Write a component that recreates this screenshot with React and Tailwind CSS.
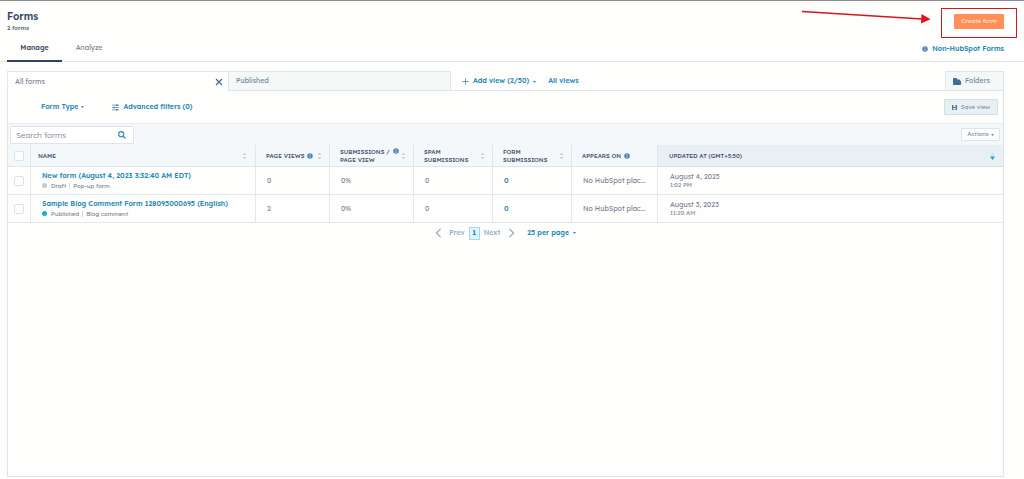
import React from "react";

const Caret = ({ className = "" }) => (
  <svg viewBox="0 0 6 4" className={`h-[2px] w-[3px] shrink-0 fill-current ${className}`} aria-hidden="true">
    <path d="M0 0h6L3 4z" />
  </svg>
);

const Info = () => (
  <svg viewBox="0 0 12 12" className="h-[6px] w-[6px] shrink-0" aria-hidden="true">
    <circle cx="6" cy="6" r="5.500" fill="#4a80b4" />
    <path d="M5 2.2h2v1.6H5zM4.6 5h2.2v3.6h.7v1H4.5v-1h.7V6h-.6z" fill="#c4d8ea" />
  </svg>
);

const Sort = ({ active = false }) => (
  <svg viewBox="0 0 10 16" className="h-[8px] w-[5px] shrink-0" aria-hidden="true">
    <path d="M1 6L5 1l4 5z" fill={active ? "#cfdbe5" : "#c9d1da"} />
    <path d={active ? "M0 9h10L5 16z" : "M1 10l4 5 4-5z"} fill={active ? "#19a5cf" : "#c9d1da"} />
  </svg>
);

const Chevron = ({ right = false }) => (
  <svg viewBox="0 0 8 12" className="h-[10px] w-[7px]" fill="none" stroke="#a0a8b2" strokeWidth="1.5" aria-hidden="true">
    <path d={right ? "M1.5 1l5 5-5 5" : "M6.5 1l-5 5 5 5"} />
  </svg>
);

const columns = [
  { label: "Page views", info: true, sort: true, width: "w-[74px]" },
  { label: "Submissions / page view", info: true, sort: true, width: "w-[84px]", lines: ["Submissions /", "page view"] },
  { label: "Spam submissions", sort: true, width: "w-[79px]", lines: ["Spam", "submissions"] },
  { label: "Form submissions", sort: true, width: "w-[79px]", lines: ["Form", "submissions"] },
  { label: "Appears on", info: true, width: "w-[86px]" },
];

const forms = [
  {
    name: "New form (August 4, 2023 3:32:40 AM EDT)",
    status: "Draft", type: "Pop-up form", views: "0", date: "August 4, 2023", time: "1:02 PM",
  },
  {
    name: "Sample Blog Comment Form 128095000695 (English)",
    status: "Published", type: "Blog comment", views: "2", date: "August 3, 2023", time: "11:20 AM",
  },
];

const Check = ({ label }) => (
  <input
    type="checkbox"
    aria-label={label}
    className="mx-auto block h-[10px] w-[10px] appearance-none rounded-[2px] border border-[#dbe2ea] bg-white"
  />
);

function PageHeader() {
  return (
    <header className="relative border-b border-[#e2e4e8] pl-[7px] pr-5">
      <div className="flex h-[36px] items-start justify-between">
        <div className="pt-[9px]">
          <h1 className="text-[10px] leading-[14px] font-semibold text-[#34476b]">Forms</h1>
          <p className="text-[6px] leading-[8px] font-medium text-[#4f5d78]">2 forms</p>
        </div>
        <button className="mt-[13px] h-[15px] w-[50px] rounded-[1px] bg-[#ff8f59] text-[6px] text-[#ffe6d8]">
          Create form
        </button>
      </div>
      <div className="flex h-[24px] items-stretch justify-between">
        <div role="tablist" className="-mb-px flex text-[7px]">
          <button role="tab" aria-selected="true" className="w-[55px] border-b-2 border-[#34406b] font-semibold text-[#45526b]">
            Manage
          </button>
          <button role="tab" aria-selected="false" className="w-[54px] border-b-2 border-transparent text-[#7c8494]">
            Analyze
          </button>
        </div>
        <a href="#non-hubspot" className="flex items-center gap-1 text-[7px] font-semibold text-[#2b8cb8]">
          <Info />
          Non-HubSpot Forms
        </a>
      </div>
      <div className="pointer-events-none absolute top-[7px] right-[7px] h-[30px] w-[76px] border border-[#d8141e]" />
      <svg viewBox="0 0 130 16" className="pointer-events-none absolute top-[8px] right-[93px] h-[16px] w-[130px]" aria-hidden="true">
        <path d="M1 2.5L121 10" stroke="#d9141c" strokeWidth="1.6" />
        <path d="M120.5 5l9 5.3-9.500 4.200z" fill="#e0101a" />
      </svg>
    </header>
  );
}

function ViewTabs() {
  return (
    <div className="flex h-[20px] items-stretch text-[7px]">
      <div className="flex w-[222px] items-center justify-between border-x border-t border-[#dfe5ea] bg-[#fefefd] pt-px pr-[5px] pl-[7px]">
        <button className="text-[#7c8494]">All forms</button>
        <button aria-label="Close view">
          <svg viewBox="0 0 8 8" className="h-[8px] w-[8px]" stroke="#41668e" strokeWidth="1.1" aria-hidden="true">
            <path d="M1 1l6 6M7 1L1 7" />
          </svg>
        </button>
      </div>
      <button className="w-[222px] border-y border-r border-[#dfe5ea] bg-[#f4f8f9] px-[7px] pt-px text-left text-[#7c8494]">
        Published
      </button>
      <div className="flex flex-1 items-center gap-3 border-b border-[#dfe5ea] pt-[2px] pl-[11px] font-semibold text-[#2b8cb8]">
        <button className="flex items-center gap-1">
          <svg viewBox="0 0 8 8" className="h-[7px] w-[7px]" stroke="#6c8299" strokeWidth="1" aria-hidden="true">
            <path d="M4 .5v7M.5 4h7" />
          </svg>
          Add view (2/50)
          <Caret />
        </button>
        <button>All views</button>
      </div>
      <button className="flex w-[59px] items-center gap-1 border border-[#dfe5ea] bg-[#f4f8f9] pt-px pl-[7px] text-[#7c8494]">
        <svg viewBox="0 0 14 12" className="h-[7px] w-[8px]" fill="#3f6d98" aria-hidden="true">
          <path d="M0 1.500Q0 0 1.500 0H6l2 2.500h3Q12.500 2.500 12.500 4v1H14v5.500Q14 12 12.500 12h-11Q0 12 0 10.500z" />
        </svg>
        Folders
      </button>
    </div>
  );
}

function Filters() {
  return (
    <div className="flex h-[32px] items-center justify-between pr-[5px] pl-[33px] text-[7px] font-semibold text-[#2b8cb8]">
      <div className="flex items-center gap-7">
        <label className="flex items-center gap-[3px]">
          <select aria-label="Form type" className="field-sizing-content appearance-none bg-transparent">
            <option>Form Type</option>
          </select>
          <Caret />
        </label>
        <button className="flex items-center gap-1">
          <svg viewBox="0 0 12 12" className="h-[7px] w-[7px]" stroke="#5b86a8" strokeWidth="1.300" fill="#5b86a8" aria-hidden="true">
            <path d="M0 2h12M0 6h12M0 10h12" />
            <circle cx="8.500" cy="2" r="1" />
            <circle cx="3.500" cy="6" r="1" />
            <circle cx="8.500" cy="10" r="1" />
          </svg>
          Advanced filters (0)
        </button>
      </div>
      <button className="flex h-[16px] w-[54px] items-center justify-center gap-1 rounded-[1px] border border-[#d3dfe7] bg-[#e9f0f4] text-[6px] font-normal text-[#7590a8]">
        <svg viewBox="0 0 10 10" className="h-[5px] w-[5px]" fill="#5079a0" aria-hidden="true">
          <path fillRule="evenodd" d="M0 0h10v10H0zM3 0v4h4V0zM2.500 6v3h5V6z" />
        </svg>
        Save view
      </button>
    </div>
  );
}

function Toolbar() {
  return (
    <div className="flex h-[22px] items-center justify-between border-t border-[#e6ecef] bg-[#f4f8f9] pr-[3px] pl-[2px]">
      <label className="flex h-[18px] w-[124px] items-center rounded-[1px] border border-[#dde4ea] bg-white px-[5px]">
        <input
          type="search"
          aria-label="Search forms"
          placeholder="Search forms"
          className="min-w-0 flex-1 bg-transparent text-[8px] font-light outline-none placeholder:text-[#7f8897]"
        />
        <svg viewBox="0 0 12 12" className="mr-[2px] h-[8px] w-[8px]" fill="none" stroke="#2b8cb8" aria-hidden="true">
          <circle cx="4.800" cy="4.800" r="3.800" strokeWidth="1.700" />
          <path d="M7.700 7.700l3.500 3.500" strokeWidth="2" />
        </svg>
      </label>
      <button className="flex h-[13px] w-[39px] items-center justify-center gap-[2px] rounded-[1px] border border-[#dde4ea] bg-white text-[6px] text-[#7c8494]">
        Actions <Caret />
      </button>
    </div>
  );
}

function FormsTable() {
  return (
    <table className="w-full table-fixed border-separate border-spacing-0 text-left text-[7px] text-[#7c8494]">
      <thead>
        <tr className="h-[22px] bg-[#f4f8fa] text-[6px] leading-[8px] text-[#43506b] uppercase">
          <th className="w-[23px] border-r border-b border-[#dfe6ec] p-0"><Check label="Select all forms" /></th>
          <th className="w-[225px] border-r border-b border-[#dfe6ec] py-0 pr-2 pl-[7px] font-medium">
            <div className="flex items-center justify-between">Name <Sort /></div>
          </th>
          {columns.map((c) => (
            <th key={c.label} className={`${c.width} border-r border-b border-[#dfe6ec] py-0 pr-[7px] pl-[10px] font-medium whitespace-nowrap`}>
              <div className="flex items-center justify-between">
                <span className={`flex gap-[3px] ${c.lines ? "items-start" : "items-center"}`}>
                  <span>{c.lines ? <>{c.lines[0]}<br />{c.lines[1]}</> : c.label}</span>
                  {c.info && <Info />}
                </span>
                {c.sort && <Sort />}
              </div>
            </th>
          ))}
          <th className="border-b border-[#d5e0e8] bg-[#e9f0f5] py-0 pr-2 pl-[11px] font-medium whitespace-nowrap">
            <div className="flex items-center justify-between">Updated at (GMT+5:30) <Sort active /></div>
          </th>
        </tr>
      </thead>
      <tbody>
        {forms.map((f) => (
          <tr key={f.name} className="h-[28px]">
            <td className="border-r border-b border-[#e4e8ec] p-0"><Check label={`Select ${f.name}`} /></td>
            <td className="border-r border-b border-[#e4e8ec] py-0 pr-0 pl-[11px]">
              <a href="#form" className="block leading-[10px] font-semibold whitespace-nowrap text-[#2b8cb8]">{f.name}</a>
              <div className="flex items-center text-[6px] leading-[10px]">
                <span className={`mr-1 h-[5px] w-[5px] rounded-full ${f.status === "Draft" ? "bg-[#c3c9d1]" : "bg-[#10b5c4]"}`} />
                {f.status}
                <span className="mx-[3px] h-[6px] w-px bg-[#d3d8de]" />
                {f.type}
              </div>
            </td>
            <td className="border-r border-b border-[#e4e8ec] pt-[2px] pb-0 pl-[11px]">{f.views}</td>
            <td className="border-r border-b border-[#e4e8ec] pt-[2px] pb-0 pl-[11px]">0%</td>
            <td className="border-r border-b border-[#e4e8ec] pt-[2px] pb-0 pl-[11px]">0</td>
            <td className="border-r border-b border-[#e4e8ec] pt-[2px] pb-0 pl-[11px]">
              <a href="#submissions" className="font-semibold text-[#2b8cb8]">0</a>
            </td>
            <td className="border-r border-b border-[#e4e8ec] pt-[2px] pb-0 pl-[11px] whitespace-nowrap">No HubSpot plac...</td>
            <td className="border-b border-[#e4e8ec] py-0 pl-3">
              <div className="leading-[9px]">{f.date}</div>
              <div className="text-[6px] leading-[8px]">{f.time}</div>
            </td>
          </tr>
        ))}
      </tbody>
    </table>
  );
}

function Pagination() {
  return (
    <nav aria-label="Pagination" className="flex h-[20px] items-center justify-center gap-3 text-[7px] font-semibold">
      <div className="flex items-center gap-1">
        <button className="flex items-center gap-[7px] text-[#9bb5cd]"><Chevron /> Prev</button>
        <button aria-current="page" className="h-[13px] w-[11px] border border-[#9fdcee] bg-[#e2f4fa] text-[#2b7ba8]">1</button>
        <button className="flex items-center gap-2 text-[#9bb5cd]">Next <Chevron right /></button>
      </div>
      <label className="flex items-center gap-1 text-[#2b8cb8]">
        <select aria-label="Forms per page" className="field-sizing-content appearance-none bg-transparent">
          <option>25 per page</option>
        </select>
        <Caret />
      </label>
    </nav>
  );
}

export default function App() {
  return (
    <div className="flex min-h-screen flex-col border-t border-[#8d8d8f] bg-[#fefefd] font-['Lexend','Inter',sans-serif]">
      <PageHeader />
      <main className="mt-[9px] mr-5 mb-[2px] ml-[7px] flex flex-1 flex-col">
        <ViewTabs />
        <section className="flex-1 border-x border-b border-[#e0e4e8]">
          <Filters />
          <Toolbar />
          <FormsTable />
          <Pagination />
        </section>
      </main>
    </div>
  );
}
